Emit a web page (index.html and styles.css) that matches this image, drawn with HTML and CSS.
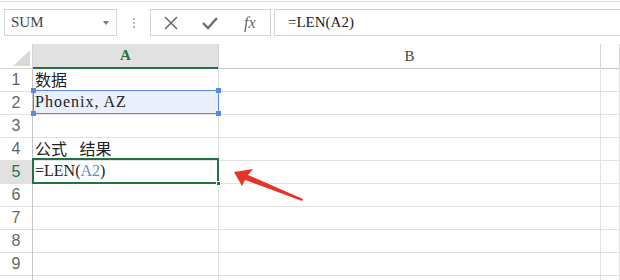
FILE: index.html
```html
<!DOCTYPE html>
<html lang="zh-CN">
<head>
    <meta charset="UTF-8">
    <title>LEN</title>
    <link rel="stylesheet" href="styles.css">
</head>
<body>
    <div class="toolbar">
        <div class="name-box">
            <span>SUM</span>
            <span class="drop"></span>
        </div>
        <div class="sep"><i></i><i></i><i></i></div>
        <div class="btn-box">
            <svg class="ico" width="14" height="14" viewBox="0 0 14 14"><path d="M1 1 L13 13 M13 1 L1 13" stroke="#6d6d6d" stroke-width="1.6" fill="none"/></svg>
            <svg class="ico" width="16" height="14" viewBox="0 0 16 14"><path d="M1 7 L6 12 L15 2" stroke="#6d6d6d" stroke-width="2.4" fill="none"/></svg>
            <span class="fx">fx</span>
        </div>
        <div class="formula">=LEN(A2)</div>
    </div>

    <div class="sheet">
        <div class="row head">
            <div class="corner"><svg width="17" height="16" viewBox="0 0 17 16"><path d="M0 16 L17 16 L17 0 Z" fill="#d9d9d9"/></svg></div>
            <div class="col-h sel-col">A</div>
            <div class="col-h">B</div>
            <div class="col-h"></div>
        </div>
        <div class="row"><div class="num">1</div><div class="cell cjk">数据</div><div class="cell"></div><div class="cell"></div></div>
        <div class="row"><div class="num">2</div><div class="cell ref">Phoenix, AZ<span class="h tl"></span><span class="h tr"></span><span class="h bl"></span><span class="h br"></span></div><div class="cell"></div><div class="cell"></div></div>
        <div class="row"><div class="num">3</div><div class="cell"></div><div class="cell"></div><div class="cell"></div></div>
        <div class="row"><div class="num">4</div><div class="cell cjk wide">公式 结果</div><div class="cell"></div><div class="cell"></div></div>
        <div class="row"><div class="num sel-row">5</div><div class="cell active">=LEN(<span class="blue">A2</span>)<span class="fill"></span></div><div class="cell"></div><div class="cell"></div></div>
        <div class="row"><div class="num">6</div><div class="cell"></div><div class="cell"></div><div class="cell"></div></div>
        <div class="row"><div class="num">7</div><div class="cell"></div><div class="cell"></div><div class="cell"></div></div>
        <div class="row"><div class="num">8</div><div class="cell"></div><div class="cell"></div><div class="cell"></div></div>
        <div class="row"><div class="num">9</div><div class="cell"></div><div class="cell"></div><div class="cell"></div></div>
        <div class="row"><div class="num"></div><div class="cell"></div><div class="cell"></div><div class="cell"></div></div>
    </div>

    <svg class="arrow" width="80" height="40" viewBox="0 0 80 40">
        <path d="M0 6 L19 3 L14 9 L69 33 L68 35 L11 14 L8 20 Z" fill="#e8332b"/>
    </svg>
</body>
</html>
```

FILE: styles.css
```css
*{
    margin: 0;
    padding: 0;
    box-sizing: border-box;
}
body{
    width: 620px;
    height: 280px;
    overflow: hidden;
    background: #fff;
    position: relative;
    font-family: "Liberation Serif", serif;
}
.toolbar{
    height: 43px;
    border-top: 1px solid #dcdcdc;
    margin-top: 1px;
    padding-top: 7px;
    display: flex;
    align-items: flex-start;
}
.name-box{
    margin-left: 4px;
    width: 113px;
    height: 27px;
    border: 1px solid #d4d4d4;
    display: flex;
    align-items: center;
    justify-content: space-between;
    padding: 0 7px 0 6px;
    font-size: 15px;
    color: #444;
}
.drop{
    width: 0;
    height: 0;
    border-left: 3px solid transparent;
    border-right: 3px solid transparent;
    border-top: 4px solid #777;
}
.sep{
    width: 33px;
    height: 27px;
    display: flex;
    flex-direction: column;
    align-items: center;
    justify-content: center;
    gap: 2px;
}
.sep i{
    width: 2px;
    height: 2px;
    background: #b5b5b5;
}
.btn-box{
    width: 121px;
    height: 27px;
    border: 1px solid #d4d4d4;
    display: flex;
    align-items: center;
    padding-left: 13px;
    gap: 24px;
}
.fx{
    font-style: italic;
    font-size: 16px;
    color: #666;
    margin-left: 2px;
}
.formula{
    margin-left: 3px;
    flex: 1;
    height: 27px;
    border: 1px solid #d4d4d4;
    border-right: none;
    padding-left: 13px;
    line-height: 25px;
    font-size: 15px;
    color: #222;
}
.sheet{
    display: flex;
    flex-direction: column;
}
.row{
    display: grid;
    grid-template-columns: 33px 186px 382px 19px;
    height: 23px;
}
.row.head{
    height: 24px;
}
.corner{
    border-right: 1px solid #d4d4d4;
    border-bottom: 1px solid #d4d4d4;
    display: flex;
    align-items: flex-end;
    justify-content: flex-end;
    padding: 0 2px 2px 0;
}
.col-h{
    border-right: 1px solid #d4d4d4;
    border-bottom: 1px solid #c6c6c6;
    text-align: center;
    font-size: 15px;
    line-height: 24px;
    color: #444;
}
.col-h.sel-col{
    background: #e1e1e1;
    color: #217346;
    font-weight: bold;
    border-bottom: 2px solid #217346;
    line-height: 22px;
}
.num{
    border-right: 1px solid #c6c6c6;
    border-bottom: 1px solid #e1e1e1;
    text-align: center;
    font-family: "Liberation Sans", sans-serif;
    font-size: 16px;
    line-height: 23px;
    color: #666;
}
.num.sel-row{
    background: #e1e1e1;
    color: #217346;
}
.cell{
    position: relative;
    border-right: 1px solid #e1e1e1;
    border-bottom: 1px solid #e1e1e1;
    padding-left: 2px;
    font-size: 16px;
    line-height: 22px;
    color: #222;
    white-space: nowrap;
}
.cell.cjk{
    font-family: "Noto Sans CJK SC", sans-serif;
    font-size: 16px;
}
.cell.wide{
    word-spacing: 9px;
}
.cell.ref{
    background: #eaf0fb;
    letter-spacing: 1px;
}
.cell.ref::after{
    content: "";
    position: absolute;
    left: 0;
    top: -1px;
    right: -1px;
    bottom: 0;
    border: 1px solid #5b8ad8;
}
.h{
    position: absolute;
    width: 5px;
    height: 5px;
    background: #5b8ad8;
    z-index: 2;
}
.tl{ left: -2px; top: -3px; }
.tr{ right: -3px; top: -3px; }
.bl{ left: -2px; bottom: -2px; }
.br{ right: -3px; bottom: -2px; }
.cell.active::after{
    content: "";
    position: absolute;
    left: -1px;
    top: -2px;
    right: -1px;
    bottom: -1px;
    border: 2px solid #217346;
}
.fill{
    position: absolute;
    right: -3px;
    bottom: -3px;
    width: 5px;
    height: 5px;
    background: #217346;
    border: 1px solid #fff;
    z-index: 2;
}
.blue{
    color: #5b8ad8;
}
.arrow{
    position: absolute;
    left: 234px;
    top: 166px;
}
```
